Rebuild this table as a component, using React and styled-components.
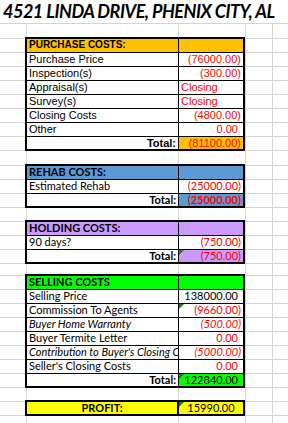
import styled, { createGlobalStyle } from 'styled-components';

const GRID = '#d4d4d4';
const RED = '#ff0000';

const GlobalStyle = createGlobalStyle`
  html, body {
    margin: 0;
    padding: 0;
    background: #fff;
  }
  * {
    box-sizing: border-box;
  }
`;

const Sheet = styled.div`
  width: 288px;
  height: 423px;
  overflow: hidden;
  display: flex;
  flex-direction: column;
  background: #fff;
`;

const TitleRow = styled.div`
  height: 24px;
  flex: none;
  border-bottom: 1px solid ${GRID};
  padding-left: 3px;
  font-family: Lato, 'Liberation Sans', sans-serif;
  font-weight: 700;
  font-style: italic;
  font-size: 18px;
  line-height: 22px;
  letter-spacing: -0.5px;
  color: #000;
  white-space: nowrap;
`;

const colLines = `linear-gradient(to right,
  transparent 0 26px, ${GRID} 26px 27px,
  transparent 27px 178px, ${GRID} 178px 179px,
  transparent 179px 245px, ${GRID} 245px 246px,
  transparent 246px 272px, ${GRID} 272px 273px,
  transparent 273px)`;

const Spacer = styled.div`
  flex: ${p => (p.$fill ? '1' : 'none')};
  height: ${p => p.$h || 14}px;
  background-image: ${colLines};
`;

const rowLines = `repeating-linear-gradient(to bottom,
  transparent 0 1px, ${GRID} 1px 2px, transparent 2px 14px)`;

const Section = styled.div`
  flex: none;
  display: flex;
`;

const LeftGutter = styled.div`
  width: 25px;
  background-image: ${rowLines};
`;

const RightGutter = styled.div`
  flex: 1;
  background-image: linear-gradient(to right,
      ${GRID} 0 1px, transparent 1px 27px, ${GRID} 27px 28px, transparent 28px),
    ${rowLines};
`;

const Table = styled.div`
  width: 220px;
  border: 2px solid #000;
  font-family: ${p =>
    p.$calibri ? "Lato, 'Liberation Sans', sans-serif" : "'Liberation Sans', Arial, sans-serif"};
  font-size: 11px;
  color: #000;
`;

const Row = styled.div`
  display: grid;
  grid-template-columns: 152px 64px;
  height: 14px;
  border-bottom: 1px solid #000;

  &:last-child {
    height: 12px;
    border-bottom: none;
  }
`;

const Cell = styled.div`
  position: relative;
  overflow: hidden;
  white-space: nowrap;
  padding: 0 ${p => (p.$pad ? 5 : 2)}px 0 2px;
  line-height: 12px;
  text-align: ${p => p.$align || 'left'};
  color: ${p => p.$color || '#000'};
  font-weight: ${p => (p.$bold ? 700 : 400)};
  font-style: ${p => (p.$italic ? 'italic' : 'normal')};
  font-size: ${p => p.$size || 11}px;
  background: ${p => p.$bg || 'transparent'};

  &:first-child {
    border-right: ${p => (p.$thick ? 2 : 1)}px solid #000;
  }
`;

const Flag = styled.span`
  position: absolute;
  top: 0;
  left: 0;
  width: 0;
  height: 0;
  border-top: 5px solid #1e7b1e;
  border-right: 5px solid transparent;
`;

const Block = ({ children, calibri }) => (
  <Section>
    <LeftGutter />
    <Table $calibri={calibri}>{children}</Table>
    <RightGutter />
  </Section>
);

const Line = ({ label, value, color, italic, pad, flag, bg }) => (
  <Row>
    <Cell $italic={italic}>{label}</Cell>
    <Cell $align="right" $color={color} $italic={italic} $pad={pad} $bg={bg}>
      {flag && <Flag />}
      {value}
    </Cell>
  </Row>
);

const Header = ({ title, bg, size }) => (
  <Row>
    <Cell $bold $bg={bg} $size={size}>{title}</Cell>
    <Cell $bg={bg} />
  </Row>
);

const Total = ({ value, bg, color, bold, pad, flag }) => (
  <Row>
    <Cell $align="right" $bold>Total:</Cell>
    <Cell $align="right" $bg={bg} $color={color} $bold={bold} $pad={pad}>
      {flag && <Flag />}
      {value}
    </Cell>
  </Row>
);

const App = () => (
  <>
    <GlobalStyle />
    <Sheet>
      <TitleRow>4521 LINDA DRIVE, PHENIX CITY, AL</TitleRow>
      <Spacer $h={13} />

      <Block>
        <Header title="PURCHASE COSTS:" bg="#ffc000" size={10} />
        <Line label="Purchase Price" value="(76000.00)" color={RED} />
        <Line label="Inspection(s)" value="(300.00)" color={RED} />
        <Row>
          <Cell>Appraisal(s)</Cell>
          <Cell $color={RED}>Closing</Cell>
        </Row>
        <Row>
          <Cell>Survey(s)</Cell>
          <Cell $color={RED}>Closing</Cell>
        </Row>
        <Line label="Closing Costs" value="(4800.00)" color={RED} />
        <Line label="Other" value="0.00" color={RED} pad />
        <Total value="(81100.00)" bg="#ffc000" color={RED} />
      </Block>
      <Spacer $h={13} />

      <Block calibri>
        <Header title="REHAB COSTS:" bg="#5b9bd5" />
        <Line label="Estimated Rehab" value="(25000.00)" color={RED} />
        <Total value="(25000.00)" bg="#5b9bd5" color={RED} bold />
      </Block>
      <Spacer $h={12} />

      <Block calibri>
        <Header title="HOLDING COSTS:" bg="#cc99ff" />
        <Line label="90 days?" value="(750.00)" color={RED} />
        <Total value="(750.00)" bg="#cc99ff" color={RED} flag />
      </Block>
      <Spacer $h={10} />

      <Block calibri>
        <Header title="SELLING COSTS" bg="#00ff00" />
        <Line label="Selling Price" value="138000.00" pad />
        <Line label="Commission To Agents" value="(9660.00)" color={RED} flag />
        <Line label="Buyer Home Warranty" value="(500.00)" color={RED} italic />
        <Line label="Buyer Termite Letter" value="0.00" color={RED} pad />
        <Line label="Contribution to Buyer's Closing Costs" value="(5000.00)" color={RED} italic />
        <Line label="Seller's Closing Costs" value="0.00" color={RED} pad />
        <Total value="122840.00" bg="#00ff00" pad flag />
      </Block>
      <Spacer $h={12} />

      <Block calibri>
        <Row>
          <Cell $thick $bold $align="center" $bg="#ffff00">PROFIT:</Cell>
          <Cell $align="center" $bg="#ffff00">
            <Flag />
            15990.00
          </Cell>
        </Row>
      </Block>
      <Spacer $fill />
    </Sheet>
  </>
);

export default App;
